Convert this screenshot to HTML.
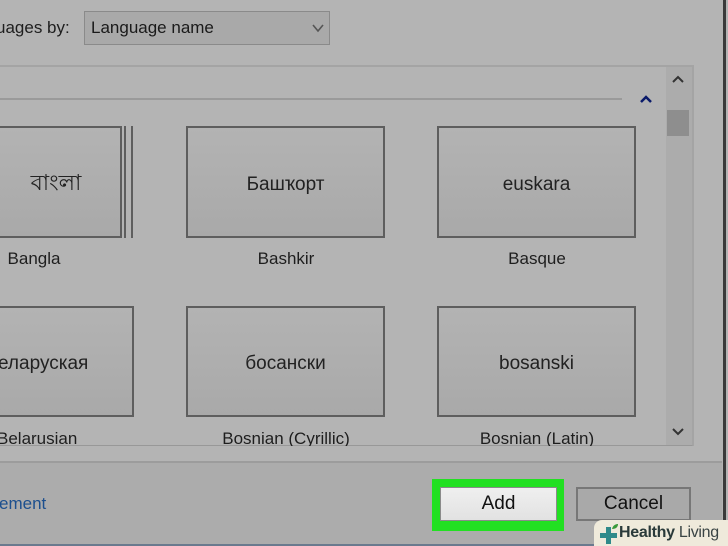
<!DOCTYPE html>
<html><head><meta charset="utf-8"><style>
html,body{margin:0;padding:0}
body{width:728px;height:546px;position:relative;overflow:hidden;background:#b4b4b4;font-family:"Liberation Sans","DejaVu Sans",sans-serif;color:#1a1a1a}
.a{position:absolute}
.tile{position:absolute;border:2px solid #5e5e5e;background:linear-gradient(#b3b3b3,#a9a9a9);box-sizing:border-box;display:flex;align-items:center;justify-content:center;font-size:19px;color:#222;padding-top:5px}
.lbl{position:absolute;font-size:17px;text-align:center;width:260px;color:#1e1e1e}
</style></head><body>
<div class="a" style="left:-4px;top:18px;font-size:17px;color:#1e1e1e">uages by:</div>
<div class="a" style="left:84px;top:11px;width:246px;height:34px;border:1px solid #8a8a8a;background:#a9a9a9;box-sizing:border-box"></div>
<div class="a" style="left:91px;top:18px;font-size:17px">Language name</div>
<svg class="a" style="left:312px;top:23px" width="12" height="10"><path d="M1 2 L6 8 L11 2" stroke="#555" stroke-width="1.6" fill="none"/></svg>

<div class="a" style="left:0;top:65px;width:694px;height:382px;border-top:2px solid #a4a4a4;border-right:2px solid #a4a4a4;border-bottom:2px solid #989898;box-sizing:border-box"></div>
<div class="a" style="left:0;top:98px;width:622px;height:2px;background:#9a9a9a"></div>
<svg class="a" style="left:639px;top:94px" width="14" height="10"><path d="M2 8 L7 3 L12 8" stroke="#0a1a6a" stroke-width="2.5" fill="none"/></svg>
<div class="a" style="left:666px;top:67px;width:26px;height:378px;background:#acacac"></div>
<svg class="a" style="left:671px;top:74px" width="14" height="10"><path d="M2 8 L7 3 L12 8" stroke="#333" stroke-width="2" fill="none"/></svg>
<div class="a" style="left:667px;top:110px;width:22px;height:26px;background:#8e8e8e"></div>
<svg class="a" style="left:671px;top:427px" width="14" height="10"><path d="M2 2 L7 7 L12 2" stroke="#333" stroke-width="2" fill="none"/></svg>
<div class="a" style="left:723px;top:0;width:3px;height:546px;background:#3a3a3a"></div>

<div class="tile" style="left:-20px;top:126px;width:142px;height:112px"><span style="margin-left:10px;font-size:22px">বাংলা</span></div>
<div class="a" style="left:124px;top:126px;width:2px;height:112px;background:#5e5e5e"></div>
<div class="a" style="left:131px;top:126px;width:2px;height:112px;background:#5e5e5e"></div>
<div class="tile" style="left:186px;top:126px;width:199px;height:112px">Башҡорт</div>
<div class="tile" style="left:437px;top:126px;width:199px;height:112px">euskara</div>
<div class="lbl" style="left:-96px;top:249px">Bangla</div>
<div class="lbl" style="left:156px;top:249px">Bashkir</div>
<div class="lbl" style="left:407px;top:249px">Basque</div>

<div class="tile" style="left:-20px;top:306px;width:154px;height:111px;justify-content:flex-start"><span style="margin-left:16px">еларуская</span></div>
<div class="tile" style="left:186px;top:306px;width:199px;height:111px">босански</div>
<div class="tile" style="left:437px;top:306px;width:199px;height:111px">bosanski</div>
<div class="lbl" style="top:429px;text-align:left;width:100px;left:-3px">Belarusian</div>
<div class="lbl" style="left:156px;top:429px">Bosnian (Cyrillic)</div>
<div class="lbl" style="left:407px;top:429px">Bosnian (Latin)</div>

<div class="a" style="left:0;top:446px;width:722px;height:17px;background:#b4b4b4"></div>
<div class="a" style="left:0;top:461px;width:722px;height:2px;background:#9c9c9c"></div>
<div class="a" style="left:0;top:463px;width:722px;height:81px;background:#acacac"></div>
<div class="a" style="left:0;top:544px;width:728px;height:2px;background:#6a7a8e"></div>
<div class="a" style="left:-1px;top:494px;font-size:17px;color:#1c4f8e">ement</div>

<div class="a" style="left:432px;top:479px;width:132px;height:52px;background:#22e022"></div>
<div class="a" style="left:440px;top:487px;width:117px;height:34px;border:1px solid #8a8a8a;background:linear-gradient(#efefef,#e2e2e2);box-sizing:border-box;text-align:center;line-height:32px;font-size:19px;color:#111">Add</div>
<div class="a" style="left:576px;top:487px;width:115px;height:34px;border:2px solid #777;background:#a9a9a9;box-sizing:border-box;text-align:center;line-height:30px;font-size:19px;color:#111">Cancel</div>

<div class="a" style="left:594px;top:520px;width:134px;height:26px;background:#efeadb;border-top-left-radius:8px"></div>
<svg class="a" style="left:598px;top:523px" width="22" height="22"><path d="M8 4h5v6h6v5h-6v6h-5v-6h-6v-5h6z" fill="#2f8a8a"/><path d="M14 6c1-4 4-5 6-5c0 3-2 5-6 5z" fill="#3a9a3a"/></svg>
<div class="a" style="left:619px;top:524px;font-size:16px;letter-spacing:-0.3px;color:#2a3a3a;white-space:nowrap"><b>Healthy</b> <span style="color:#3a4444">Living</span></div>
</body></html>
